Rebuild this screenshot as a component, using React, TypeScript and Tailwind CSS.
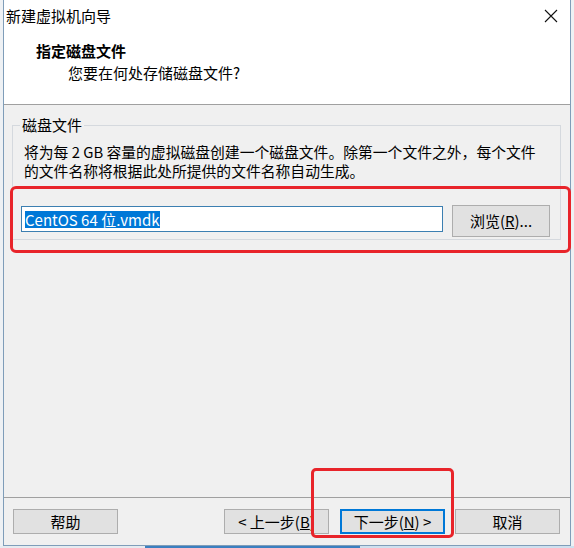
import React from "react";

const btn =
  "h-[25px] w-[105px] flex items-center justify-center bg-[#e1e1e1] border border-[#adadad] text-[15px] text-black leading-none";

const App: React.FC = () => {
  return (
    <div className="relative w-[574px] h-[548px] bg-[#eef1f4] overflow-hidden font-['Noto_Sans_CJK_SC','Noto_Sans',sans-serif] text-black">
      {/* window */}
      <div className="ml-[3px] w-[568px] h-[546px] border-x border-b border-[#7f9db9] flex flex-col bg-[#f0f0f0]">
        {/* title bar */}
        <div className="h-[32px] bg-white flex items-center justify-between pl-[2px] pr-[12px]">
          <span className="text-[15px] leading-[20px]">新建虚拟机向导</span>
          <svg width="14" height="14" viewBox="0 0 14 14">
            <path d="M1 1 L13 13 M13 1 L1 13" stroke="#111" strokeWidth="1.1" />
          </svg>
        </div>

        {/* header */}
        <div className="h-[72px] bg-white pl-[32px] pt-[9px]">
          <div className="text-[15px] leading-[20px] font-bold">指定磁盘文件</div>
          <div className="text-[15px] leading-[20px] mt-[2px] pl-[32px]">您要在何处存储磁盘文件?</div>
        </div>

        {/* body */}
        <div className="flex-1 border-t border-[#a0a0a0] pt-[10px] pl-[8px] pr-[9px]">
          <fieldset className="border border-[#d5d9de] pl-[7px] pr-[7px] pb-[2px]">
            <legend className="px-[2px] text-[15px] leading-[20px]">磁盘文件</legend>
            <p className="ml-[4px] mt-[8px] text-[14.8px] leading-[18.5px] whitespace-nowrap">
              将为每 2 GB 容量的虚拟磁盘创建一个磁盘文件。除第一个文件之外，每个文件
              <br />
              的文件名称将根据此处所提供的文件名称自动生成。
            </p>
            <div className="flex items-start mt-[25px]">
              <div className="ml-[1px] mt-[1px] w-[422px] h-[26px] bg-white border border-[#3c7fb1] flex items-center pl-[3px]">
                <span className="bg-[#0078d7] text-white text-[15px] leading-[17px]">CentOS 64 位.vmdk</span>
              </div>
              <div className="ml-[9px] w-[98px] h-[32px] flex items-center justify-center bg-[#e1e1e1] border border-[#adadad] text-[15px]">
                浏览(<span className="underline">R</span>)...
              </div>
            </div>
          </fieldset>
        </div>

        {/* footer */}
        <div className="h-[48px] border-t border-[#a0a0a0] pt-[11px] pl-[9px] pr-[10px] flex items-start justify-between">
          <div className={btn}>帮助</div>
          <div className="flex items-start">
            <div className={btn}>
              &lt; 上一步(<span className="underline">B</span>)
            </div>
            <div className={btn + " ml-[11px] !border-2 !border-[#0078d7]"}>
              下一步(<span className="underline">N</span>) &gt;
            </div>
            <div className={btn + " ml-[10px]"}>取消</div>
          </div>
        </div>
      </div>

      {/* desktop strip under the window */}
      <div className="flex h-[2px]">
        <div className="w-[145px] bg-[#e6ebf0]" />
        <div className="w-[215px] bg-[#3b7fc0]" />
        <div className="flex-1 bg-[#cfe0ef]" />
      </div>

      {/* red annotation boxes */}
      <div className="absolute left-[10px] top-[186px] w-[561px] h-[67px] border-[3px] border-[#e8242a] rounded-[6px]" />
      <div className="absolute left-[311px] top-[468px] w-[143px] h-[70px] border-[3px] border-[#e8242a] rounded-[5px]" />
    </div>
  );
};

export default App;
